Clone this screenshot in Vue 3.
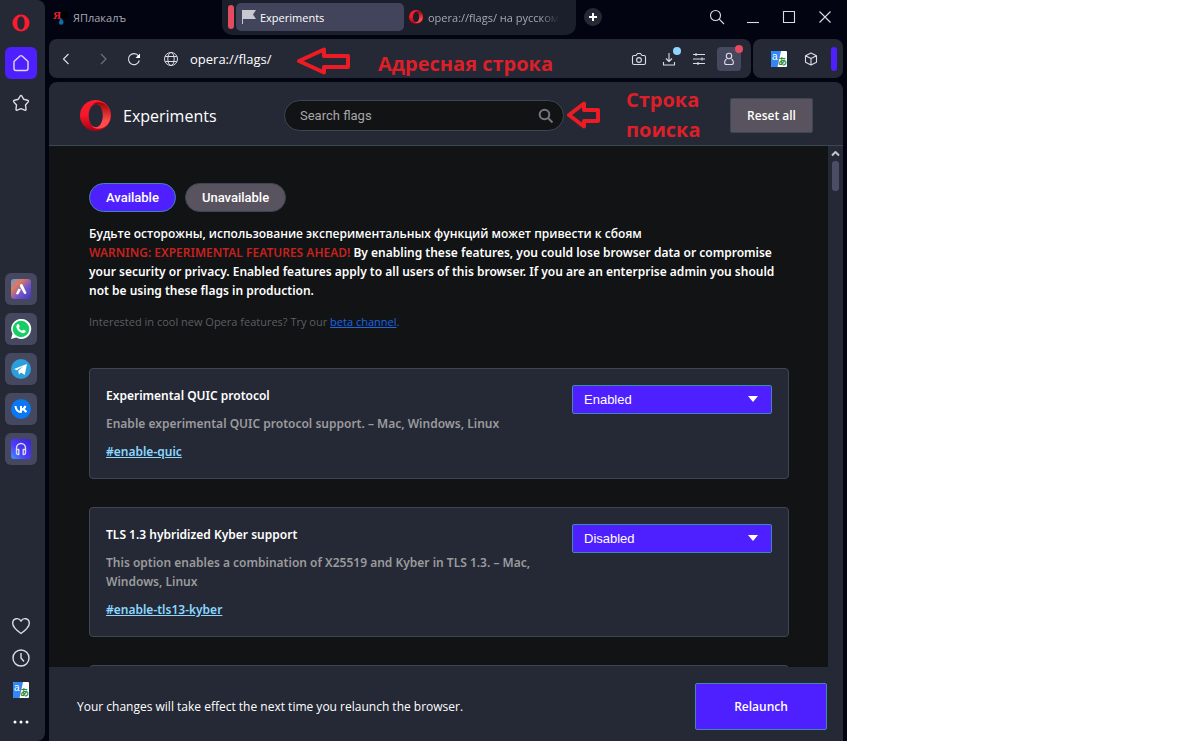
<script setup>
import { ref } from 'vue'

const address = ref('opera://flags/')
const search = ref('')
const flags = ref([
  {
    id: 'enable-quic',
    title: 'Experimental QUIC protocol',
    text: 'Enable experimental QUIC protocol support. – Mac, Windows, Linux',
    value: 'Enabled',
  },
  {
    id: 'enable-tls13-kyber',
    title: 'TLS 1.3 hybridized Kyber support',
    text: 'This option enables a combination of X25519 and Kyber in TLS 1.3. – Mac, Windows, Linux',
    value: 'Disabled',
  },
])
const choices = ['Default', 'Enabled', 'Disabled']
</script>

<template>
  <div class="page">
    <div class="window">
      <svg class="defs" width="0" height="0" aria-hidden="true">
        <defs>
          <linearGradient id="ring" x1="0" y1="0" x2="0" y2="1">
            <stop offset="0" stop-color="#ff1b2d" />
            <stop offset="0.5" stop-color="#f5172a" />
            <stop offset="1" stop-color="#a70014" />
          </linearGradient>
          <linearGradient id="ringInner" x1="0" y1="0" x2="0" y2="1">
            <stop offset="0" stop-color="#9c0000" />
            <stop offset="0.7" stop-color="#ff4b4b" />
            <stop offset="1" stop-color="#ff4b4b" />
          </linearGradient>
          <linearGradient id="aria" x1="0" y1="0" x2="1" y2="1">
            <stop offset="0" stop-color="#5a9fe0" />
            <stop offset="0.3" stop-color="#e2785a" />
            <stop offset="0.6" stop-color="#7556c9" />
            <stop offset="1" stop-color="#3f35c0" />
          </linearGradient>
          <linearGradient id="player" x1="0" y1="1" x2="1" y2="0">
            <stop offset="0" stop-color="#3f9bff" />
            <stop offset="0.4" stop-color="#4d3bff" />
            <stop offset="1" stop-color="#3a22d8" />
          </linearGradient>
          <symbol id="opera" viewBox="0 0 32 32">
            <path fill="url(#ring)" fill-rule="evenodd" d="M16 0a16 16 0 1 0 0 32a16 16 0 1 0 0-32zM16.500 4c4.200 0 7.500 5.200 7.500 12s-3.300 12-7.500 12s-7.500-5.200-7.500-12s3.300-12 7.500-12z" />
            <path fill="url(#ringInner)" d="M11 6.500c2-2.500 4.500-4.200 7.500-4.200c8 0 13 6 13 13.700s-5 13.700-13 13.700c-3 0-5.500-1.500-7.500-4.200c1.500 1.800 3.400 2.500 5.500 2.500c4 0 7-5.200 7-12s-3-12-7-12c-2.100 0-4 .7-5.500 2.500z" />
          </symbol>
          <symbol id="translate" viewBox="0 0 16 16">
            <rect width="16" height="16" rx="1" fill="#fff" />
            <path fill="#3187f5" d="M1 0h9L6.500 16H1a1 1 0 0 1-1-1V1a1 1 0 0 1 1-1z" />
            <text x="1" y="9" font-size="10" fill="#fff" font-family="Liberation Sans, sans-serif">a</text>
            <text x="7" y="14" font-size="9" font-weight="700" fill="#2f8a37" font-family="Noto Sans CJK JP, sans-serif">あ</text>
          </symbol>
        </defs>
      </svg>

      <nav class="sidebar" aria-label="Sidebar">
        <button class="side" aria-label="Opera menu">
          <svg class="plain" width="18" height="18" viewBox="0 0 18 18"><path fill="#ff1b2d" fill-rule="evenodd" d="M9 0.500a8.500 8.500 0 1 0 0 17a8.500 8.500 0 1 0 0-17zM9 2.500c2.300 0 3.700 2.700 3.700 6.500s-1.400 6.500-3.700 6.500s-3.700-2.700-3.700-6.500s1.400-6.500 3.700-6.500z" /></svg>
        </button>
        <button class="side home" aria-label="Home">
          <svg width="18" height="18" viewBox="0 0 18 18"><path d="M2 7.600L8 2q1-.8 2 0l6 5.600v6.900a2 2 0 0 1-2 2H4a2 2 0 0 1-2-2z" /></svg>
        </button>
        <button class="side" aria-label="Bookmarks">
          <svg width="18" height="18" viewBox="0 0 18 18"><path d="M8.200 2q.8-1 1.600 0l1.800 3.200 4 1q1.400.5.600 1.700L13.500 11l.5 4.200q0 1.400-1.300 1L9 14.700l-3.700 1.500q-1.300.4-1.300-1L4.500 11 1.800 7.900q-.8-1.200.6-1.700l4-1z" /></svg>
        </button>
        <div class="apps">
          <button class="side app" aria-label="Aria">
            <svg width="20" height="20" viewBox="0 0 20 20"><rect class="flat" width="20" height="20" rx="3" fill="url(#aria)" /><path class="white" d="M9 5.500q1.300-1.200 2.500 0L15.500 14q-.8 1.800-2.500.5L9 7.500zM7.500 9.500l2.500 1L7.500 15q-1.500 1-2.500-.5z" /></svg>
          </button>
          <button class="side app" aria-label="WhatsApp">
            <svg width="22" height="22" viewBox="0 0 22 22"><path class="white" d="M1 21l1.500-5.200A10 10 0 1 1 6.300 19.600z" /><circle class="flat" cx="11" cy="11" r="8.300" fill="#16cf64" /><path class="white" d="M7.500 6.300c.8-.6 1.500 0 2.200 2 .2.500-.7 1.200-.7 1.600.7 1.400 1.600 2.200 3 2.800.5 0 1-1.100 1.500-1 .8.200 2.200.8 2.200 1.300 0 1.500-1.500 2.400-2.900 2.200-3.300-.7-5.700-3-6.400-5.600-.2-1.200.3-2.600 1.100-3.300z" /></svg>
          </button>
          <button class="side app" aria-label="Telegram">
            <svg width="20" height="20" viewBox="0 0 20 20"><circle class="flat" cx="10" cy="10" r="10" fill="#2b9fdc" /><path class="white" d="M3 10l13-5-2.300 11-3.700-2.600-2 2-.8-3.700 5-4.400-6.400 4z" /></svg>
          </button>
          <button class="side app" aria-label="VK">
            <svg width="20" height="20" viewBox="0 0 20 20"><circle class="flat" cx="10" cy="10" r="10" fill="#0a78f5" /><path class="mark" d="M4.500 7c.4 4 2.500 6 5.500 6V7M10 10.500c2.500-.2 3.600-1.500 4.500-3.500M10.300 10c2.700.2 4 1.300 5 3.200" /></svg>
          </button>
          <button class="side app" aria-label="Player">
            <svg width="20" height="20" viewBox="0 0 20 20"><rect class="flat" width="20" height="20" rx="3" fill="url(#player)" /><path d="M5.500 13V9a4.500 4.500 0 0 1 9 0v4M5.500 10.500h2.300v5H7a1.500 1.500 0 0 1-1.500-1.500zM14.500 10.500h-2.300v5h.8a1.500 1.500 0 0 0 1.500-1.500z" /></svg>
          </button>
        </div>
        <div class="tools">
          <button class="tool" aria-label="Favourites">
            <svg width="20" height="18" viewBox="0 0 20 18"><path d="M10 16.500C5 13 1.700 10 1.700 6.300c0-5 6-6.300 8.300-2.200 2.300-4.100 8.300-2.800 8.300 2.200 0 3.700-3.300 6.700-8.300 10.200z" /></svg>
          </button>
          <button class="tool" aria-label="History">
            <svg width="18" height="18" viewBox="0 0 18 18"><circle cx="9" cy="9" r="8" /><path d="M9 4v5l3 3.500" /></svg>
          </button>
          <button class="tool" aria-label="Translate"><svg class="plain" width="16" height="16"><use href="#translate" /></svg></button>
          <button class="tool" aria-label="More">
            <svg width="16" height="4" viewBox="0 0 16 4"><g class="white"><circle cx="2" cy="2" r="1.500" /><circle cx="8" cy="2" r="1.500" /><circle cx="14" cy="2" r="1.500" /></g></svg>
          </button>
        </div>
      </nav>

      <div class="main">
        <header class="tabs">
          <button class="tab first">
            <svg class="plain" width="15" height="15" viewBox="0 0 15 15"><path fill="#000" d="M8 2h7v6H8z" /><text x="0" y="9" font-size="11" font-weight="700" fill="#ee2030" font-family="Liberation Serif, serif">Я</text><path fill="#0d6fa5" d="M8 8c2 2.500 2.500 3.500 2.500 4.500a2.300 2.300 0 0 1-4.600 0C6 11 7 10 8 8z" /></svg>
            <span>ЯПлакалъ</span>
          </button>
          <div class="group">
            <i class="marker"></i>
            <button class="tab active">
              <svg class="plain" width="14" height="14" viewBox="0 0 14 14"><path fill="#c8c9d0" d="M0 0h14l-3 4.500 3 4.500H1v5H0z" /></svg>
              <span>Experiments</span>
            </button>
            <button class="tab other">
              <svg class="plain" width="14" height="14"><use href="#opera" /></svg>
              <span>opera://flags/ на русском</span>
            </button>
          </div>
          <button class="plus" aria-label="New tab"><svg width="8" height="8" viewBox="0 0 8 8"><path d="M4 0v8M0 4h8" /></svg></button>
          <div class="controls">
            <button aria-label="Search tabs"><svg width="16" height="16" viewBox="0 0 16 16"><circle cx="6.500" cy="6.500" r="5" /><path d="M10.200 10.200L15 15" /></svg></button>
            <button aria-label="Minimize"><svg width="14" height="14" viewBox="0 0 14 14"><path d="M1 12.500h12" /></svg></button>
            <button aria-label="Maximize"><svg width="14" height="14" viewBox="0 0 14 14"><path d="M1.500 1.500h11v11h-11z" /></svg></button>
            <button aria-label="Close"><svg width="14" height="14" viewBox="0 0 14 14"><path d="M1.500 1.500l11 11M12.500 1.500l-11 11" /></svg></button>
          </div>
        </header>

        <div class="bars">
          <div class="bar address">
            <button class="icon" aria-label="Back"><svg width="12" height="12" viewBox="0 0 12 12"><path d="M8.500 1L3.500 6l5 5" /></svg></button>
            <button class="icon forward" aria-label="Forward"><svg width="12" height="12" viewBox="0 0 12 12"><path d="M4 1l5 5-5 5" /></svg></button>
            <button class="icon reload" aria-label="Reload"><svg width="14" height="14" viewBox="0 0 14 14"><path d="M12.300 8.500A5.500 5.500 0 1 1 11.500 4" /><path class="white" d="M13 1.500V6H8.500z" /></svg></button>
            <svg class="globe" width="16" height="16" viewBox="0 0 16 16"><circle cx="8" cy="8" r="6.500" /><ellipse cx="8" cy="8" rx="3.200" ry="6.500" /><path d="M2.200 5.500h11.600M2.200 10.500h11.600" /></svg>
            <input v-model="address" class="url" type="text" aria-label="Address" />
            <div class="actions">
              <button class="icon" aria-label="Snapshot"><svg width="16" height="16" viewBox="0 0 16 16"><path d="M3 4.500h2L6.500 2.500h3L11 4.500h2a1.500 1.500 0 0 1 1.500 1.500v6a1.500 1.500 0 0 1-1.500 1.500H3A1.500 1.500 0 0 1 1.500 12V6A1.500 1.500 0 0 1 3 4.500z" /><circle cx="8" cy="9" r="2.400" /></svg></button>
              <button class="icon" aria-label="Downloads"><svg width="14" height="14" viewBox="0 0 14 14"><path d="M7 1v8.500M4 6.500l3 3 3-3M1.500 10v3h11v-3" /></svg><i class="dot blue"></i></button>
              <button class="icon" aria-label="Easy setup"><svg width="14" height="14" viewBox="0 0 14 14"><path d="M1 2.500h12M1 7h12M1 11.500h12M4 1v3M10 5.500v3M6 10v3" /></svg></button>
              <button class="icon user" aria-label="Profile"><svg width="14" height="14" viewBox="0 0 14 14"><circle cx="7" cy="4" r="2.700" /><path d="M4.500 7c-2 1.500-3 5.500 0 5.500h5c3 0 2-4 0-5.500" /></svg><i class="dot pink"></i></button>
            </div>
          </div>
          <div class="bar extensions">
            <button class="icon" aria-label="Translate page"><svg class="plain" width="16" height="16"><use href="#translate" /></svg></button>
            <button class="icon" aria-label="Extensions"><svg width="14" height="14" viewBox="0 0 14 14"><path d="M7 1l5.500 2.700v6.600L7 13l-5.500-2.700V3.700zM1.500 3.700L7 6.500l5.500-2.800M7 6.500V13" /></svg></button>
            <i class="handle"></i>
          </div>
        </div>

        <section class="content">
          <header class="head">
            <svg class="plain" width="31" height="31"><use href="#opera" /></svg>
            <h1>Experiments</h1>
            <label class="search">
              <input v-model="search" type="search" placeholder="Search flags" aria-label="Search flags" />
              <svg width="16" height="16" viewBox="0 0 16 16"><circle cx="6.500" cy="6.500" r="4.800" /><path d="M10 10l4.500 4.500" /></svg>
            </label>
            <button class="reset">Reset all</button>
          </header>

          <div class="body">
            <main class="flags">
              <div class="pills">
                <button class="pill on">Available</button>
                <button class="pill">Unavailable</button>
              </div>
              <p class="warning">
                Будьте осторожны, использование экспериментальных функций может привести к сбоям
              </p>
              <p class="warning english">
                <span class="alert">WARNING: EXPERIMENTAL FEATURES AHEAD!</span> By enabling these features, you could lose browser data or compromise your security or privacy. Enabled features apply to all users of this browser. If you are an enterprise admin you should not be using these flags in production.
              </p>
              <p class="promo">Interested in cool new Opera features? Try our <a href="#beta">beta channel</a>.</p>
              <article v-for="flag in flags" :key="flag.id" class="card">
                <div class="info">
                  <h2>{{ flag.title }}</h2>
                  <p>{{ flag.text }}</p>
                  <a :href="'#' + flag.id">#{{ flag.id }}</a>
                </div>
                <div class="picker">
                  <select v-model="flag.value" :aria-label="flag.title">
                    <option v-for="choice in choices" :key="choice">{{ choice }}</option>
                  </select>
                  <svg width="10" height="6" viewBox="0 0 10 6"><path class="white" d="M0 0h10L5 6z" /></svg>
                </div>
              </article>
              <article class="card next"></article>
            </main>
            <div class="scroll">
              <svg width="9" height="7" viewBox="0 0 9 7"><path d="M1 5.500L4.500 2 8 5.500" /></svg>
              <i class="thumb"></i>
            </div>
          </div>

          <footer class="foot">
            <span>Your changes will take effect the next time you relaunch the browser.</span>
            <button class="relaunch">Relaunch</button>
          </footer>
        </section>
      </div>

      <svg class="note arrow-address" width="56" height="28" viewBox="0 0 56 28"><path d="M3 14L28 2.500V9h24v11H28v5.500z" /></svg>
      <span class="note text-address">Адресная строка</span>
      <svg class="note arrow-search" width="36" height="28" viewBox="0 0 36 28"><path d="M3 14L18 2.500V9h14v11H18v5.500z" /></svg>
      <span class="note text-search">Строка<br />поиска</span>
    </div>
  </div>
</template>

<style>
body {
  margin: 0;
  background: #fff;
}
</style>

<style scoped>
* {
  box-sizing: border-box;
}
.page {
  height: 100vh;
  padding-right: 354px;
  font-family: "Open Sans", "Noto Sans", sans-serif;
  font-size: 13px;
  color: #fff;
}
.window {
  position: relative;
  display: flex;
  gap: 4px;
  height: 100%;
  padding-right: 4px;
  background: #020412;
}
.defs {
  position: absolute;
}
button {
  display: flex;
  align-items: center;
  justify-content: center;
  padding: 0;
  border: 0;
  background: none;
  color: inherit;
  font: inherit;
}
svg {
  flex: none;
  fill: none;
  stroke: #dcdde3;
  stroke-width: 1.1;
  stroke-linejoin: round;
}
.plain,
.flat {
  stroke: none;
}
.white {
  fill: #fff;
  stroke: none;
}
.mark {
  stroke: #fff;
  stroke-width: 2;
}

.sidebar {
  display: flex;
  flex-direction: column;
  gap: 8px;
  width: 45px;
  padding: 7px 8px 7px 5px;
  border-radius: 0 8px 8px 0;
  background: #252936;
}
.side {
  width: 32px;
  height: 32px;
  border-radius: 6px;
}
.side svg,
.tool svg {
  stroke-width: 1.4;
}
.home {
  background: #4e20ff;
}
.apps {
  display: flex;
  flex-direction: column;
  gap: 8px;
  margin-top: 146px;
}
.app {
  background: #45485e;
}
.tools {
  display: flex;
  flex-direction: column;
  gap: 8px;
  margin-top: auto;
}
.tool {
  width: 31px;
  height: 24px;
}

.main {
  display: flex;
  flex: 1;
  flex-direction: column;
  min-width: 0;
}
.tabs {
  display: flex;
  align-items: flex-start;
  height: 39px;
  font-size: 11px;
}
.tab {
  justify-content: flex-start;
  height: 28px;
  margin-top: 3px;
  white-space: nowrap;
}
.first {
  gap: 5px;
  width: 173px;
  padding-left: 4px;
  color: #a6a8b2;
}
.group {
  display: flex;
  width: 354px;
  height: 35px;
  padding-left: 6px;
  border-radius: 0 0 10px 10px;
  background: #1b1e2b;
}
.marker {
  width: 6px;
  height: 24px;
  margin: 5px 2px 0 0;
  border-radius: 3px;
  background: #e44b5f;
}
.active {
  gap: 4px;
  width: 168px;
  padding-left: 6px;
  border-radius: 5px;
  background: #41445a;
}
.other {
  flex: 1;
  gap: 5px;
  min-width: 0;
  padding-left: 5px;
  color: #a6a8b2;
}
.other span {
  mask-image: linear-gradient(90deg, #000 85%, transparent);
}
.plus {
  width: 18px;
  height: 18px;
  margin: 8px 0 0 8px;
  border-radius: 50%;
  background: #252936;
}
.plus svg {
  stroke: #fff;
  stroke-width: 2;
}
.controls {
  display: flex;
  gap: 12px;
  margin: 5px 6px 0 auto;
}
.controls button {
  width: 24px;
  height: 24px;
}

.bars {
  display: flex;
  gap: 2px;
  margin-bottom: 4px;
}
.bar {
  display: flex;
  align-items: center;
  height: 39px;
  border-radius: 8px;
  background: #252936;
}
.address {
  flex: 1;
  min-width: 0;
  padding: 0 10px 0 5px;
}
.icon {
  position: relative;
  width: 24px;
  height: 24px;
}
.forward {
  margin: 0 7px 0 13px;
  opacity: 0.4;
}
.globe {
  margin: 0 11px 0 17px;
  stroke-width: 1;
}
.url {
  flex: 1;
  min-width: 0;
  padding: 0;
  border: 0;
  outline: 0;
  background: none;
  color: #fff;
  font: inherit;
}
.actions {
  display: flex;
  gap: 6px;
}
.user {
  border-radius: 4px;
  background: #45485e;
}
.dot {
  position: absolute;
  width: 8px;
  height: 8px;
  border-radius: 50%;
}
.blue {
  top: 0;
  right: 0;
  background: #8fd6ff;
}
.pink {
  top: -2px;
  right: -2px;
  background: #e44b5f;
}
.extensions {
  gap: 8px;
  padding: 0 6px 0 14px;
}
.handle {
  width: 6px;
  height: 24px;
  border-radius: 3px;
  background: #4e20ff;
}

.content {
  display: flex;
  flex: 1;
  flex-direction: column;
  min-height: 0;
  border-radius: 8px 8px 0 0;
  overflow: hidden;
  background: #252936;
}
.head {
  display: flex;
  align-items: center;
  height: 64px;
  padding: 4px 30px 0 31px;
  border-bottom: 1px solid #3d4753;
}
h1 {
  width: 161px;
  margin: 0 0 0 12px;
  font-size: 16px;
  font-weight: 400;
}
.search {
  display: flex;
  align-items: center;
  width: 280px;
  height: 31px;
  padding: 0 9px 0 15px;
  border: 1px solid #3d4753;
  border-radius: 16px;
  background: #111314;
}
.search input {
  flex: 1;
  min-width: 0;
  padding: 0;
  border: 0;
  outline: 0;
  background: none;
  color: #fff;
  font: 13px Roboto, sans-serif;
}
.search input::placeholder {
  color: #a8a8a8;
  opacity: 1;
}
.search svg {
  stroke: #757780;
  stroke-width: 2;
}
.reset {
  width: 83px;
  height: 35px;
  margin-left: auto;
  border: 1px solid #3d4753;
  border-radius: 2px;
  background: #58535e;
  font-size: 12px;
  font-weight: 600;
}
.body {
  display: flex;
  flex: 1;
  min-height: 0;
}
.flags {
  flex: 1;
  min-width: 0;
  padding: 37px 39px 0 40px;
  overflow: hidden;
  background: #111314;
}
.pills {
  display: flex;
  gap: 9px;
  margin-bottom: 12px;
}
.pill {
  height: 29px;
  padding: 0 16px;
  border: 1px solid #3d4753;
  border-radius: 15px;
  background: #58535e;
  font: 500 13px Roboto, sans-serif;
}
.on {
  border-color: #4287b0;
  background: #4e20ff;
}
.warning {
  margin: 0;
  font-size: 12px;
  font-weight: 600;
  line-height: 19px;
}
.english {
  margin-bottom: 13px;
  font-family: "Noto Sans", sans-serif;
}
.alert {
  color: #c5221f;
}
.promo {
  margin: 0 0 37px;
  color: #5c5f62;
  font-size: 11px;
  line-height: 18px;
}
.promo a {
  color: #1a66e8;
}
.card {
  display: flex;
  gap: 24px;
  margin-bottom: 28px;
  padding: 16px;
  border: 1px solid #3d4753;
  border-radius: 4px;
  background: #252936;
  font-family: "Noto Sans", sans-serif;
  font-size: 12px;
  font-weight: 600;
  line-height: 19px;
}
.next {
  height: 111px;
}
.info {
  display: flex;
  flex: 1;
  flex-direction: column;
  align-items: flex-start;
  gap: 9px;
  padding: 1px 0;
}
.info h2,
.info p {
  margin: 0;
  font-size: inherit;
  font-weight: inherit;
}
.info p {
  color: #9b9b9c;
}
.info a {
  color: #8ad8ff;
}
.picker {
  position: relative;
  width: 200px;
}
.picker select {
  width: 100%;
  height: 29px;
  padding: 0 11px;
  border: 1px solid #4287b0;
  border-radius: 2px;
  appearance: none;
  background: #4e20ff;
  color: #fff;
  font: 13px "Liberation Sans", sans-serif;
}
.picker svg {
  position: absolute;
  top: 11px;
  right: 14px;
  pointer-events: none;
}
.scroll {
  display: flex;
  flex-direction: column;
  align-items: center;
  gap: 4px;
  width: 15px;
  padding-top: 4px;
}
.scroll svg {
  stroke: #c4c5ca;
  stroke-width: 2;
}
.thumb {
  width: 7px;
  height: 30px;
  border-radius: 3px;
  background: #4a4d63;
}
.foot {
  display: flex;
  align-items: center;
  justify-content: space-between;
  padding: 16px 16px 11px 28px;
  font-size: 12px;
}
.relaunch {
  width: 132px;
  height: 47px;
  border: 1px solid #4287b0;
  border-radius: 2px;
  background: #4e20ff;
  font-weight: 600;
}

.note {
  position: absolute;
  stroke: #ed1c24;
  stroke-width: 4;
  color: #dc1f28;
  font-size: 20px;
  font-weight: 700;
  line-height: 30px;
  pointer-events: none;
}
.arrow-address {
  top: 47px;
  left: 296px;
}
.text-address {
  top: 49px;
  left: 378px;
}
.arrow-search {
  top: 101px;
  left: 566px;
}
.text-search {
  top: 85px;
  left: 626px;
}
span.note {
  stroke: none;
}
</style>
